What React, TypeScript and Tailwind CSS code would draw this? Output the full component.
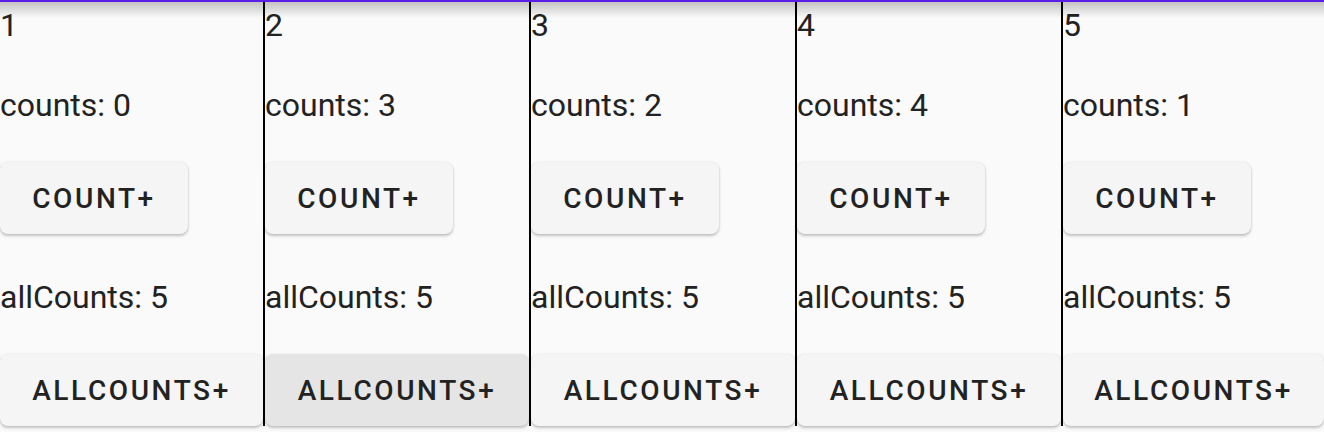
import React from "react";

const cols = [
  { n: 1, c: 0, pressed: false },
  { n: 2, c: 3, pressed: true },
  { n: 3, c: 2, pressed: false },
  { n: 4, c: 4, pressed: false },
  { n: 5, c: 1, pressed: false },
];

function Column({ n, c, pressed, first, last }: { n: number; c: number; pressed: boolean; first: boolean; last: boolean }) {
  return (
    <div
      className={
        "flex flex-col shrink-0 h-[424px] " +
        (first ? "w-[265px] border-r-2 border-black" : last ? "w-[261px]" : "w-[266px] border-r-2 border-black")
      }
    >
      <div className="pt-[4px] text-[32px] leading-[38px] text-[#222]">{n}</div>
      <div className="mt-[42px] text-[32px] leading-[38px] text-[#222]">counts: {c}</div>
      <div className="mt-[38px] h-[72px] w-[188px] pt-[2px] rounded-[8px] bg-[#f5f5f5] shadow-[0_2px_3px_rgba(0,0,0,0.22),0_0_2px_rgba(0,0,0,0.10)] flex items-center justify-center text-[28px] font-medium tracking-[2.6px] text-[#222]">
        COUNT+
      </div>
      <div className="mt-[44px] text-[32px] leading-[38px] text-[#222]">allCounts: 5</div>
      <div
        className={
          "mt-[38px] h-[72px] w-full pt-[2px] rounded-[8px] shadow-[0_2px_3px_rgba(0,0,0,0.22),0_0_2px_rgba(0,0,0,0.10)] flex items-center justify-center text-[28px] font-medium tracking-[2.6px] text-[#222] " +
          (pressed ? "bg-[#e5e5e5]" : "bg-[#f5f5f5]")
        }
      >
        ALLCOUNTS+
      </div>
    </div>
  );
}

export default function App() {
  return (
    <div className="relative w-[1324px] h-[432px] overflow-hidden bg-[#fafafa]" style={{ fontFamily: "Roboto, 'Noto Sans', sans-serif" }}>
      <div className="flex pt-[2px]">
        {cols.map((col, i) => (
          <Column key={col.n} {...col} first={i === 0} last={i === cols.length - 1} />
        ))}
      </div>
      <div className="absolute left-0 top-0 w-full h-[2px] bg-[#5a1ee6]" />
      <div className="absolute left-0 top-[2px] w-full h-[16px] bg-gradient-to-b from-[rgba(0,0,0,0.22)] to-transparent pointer-events-none" />
    </div>
  );
}
